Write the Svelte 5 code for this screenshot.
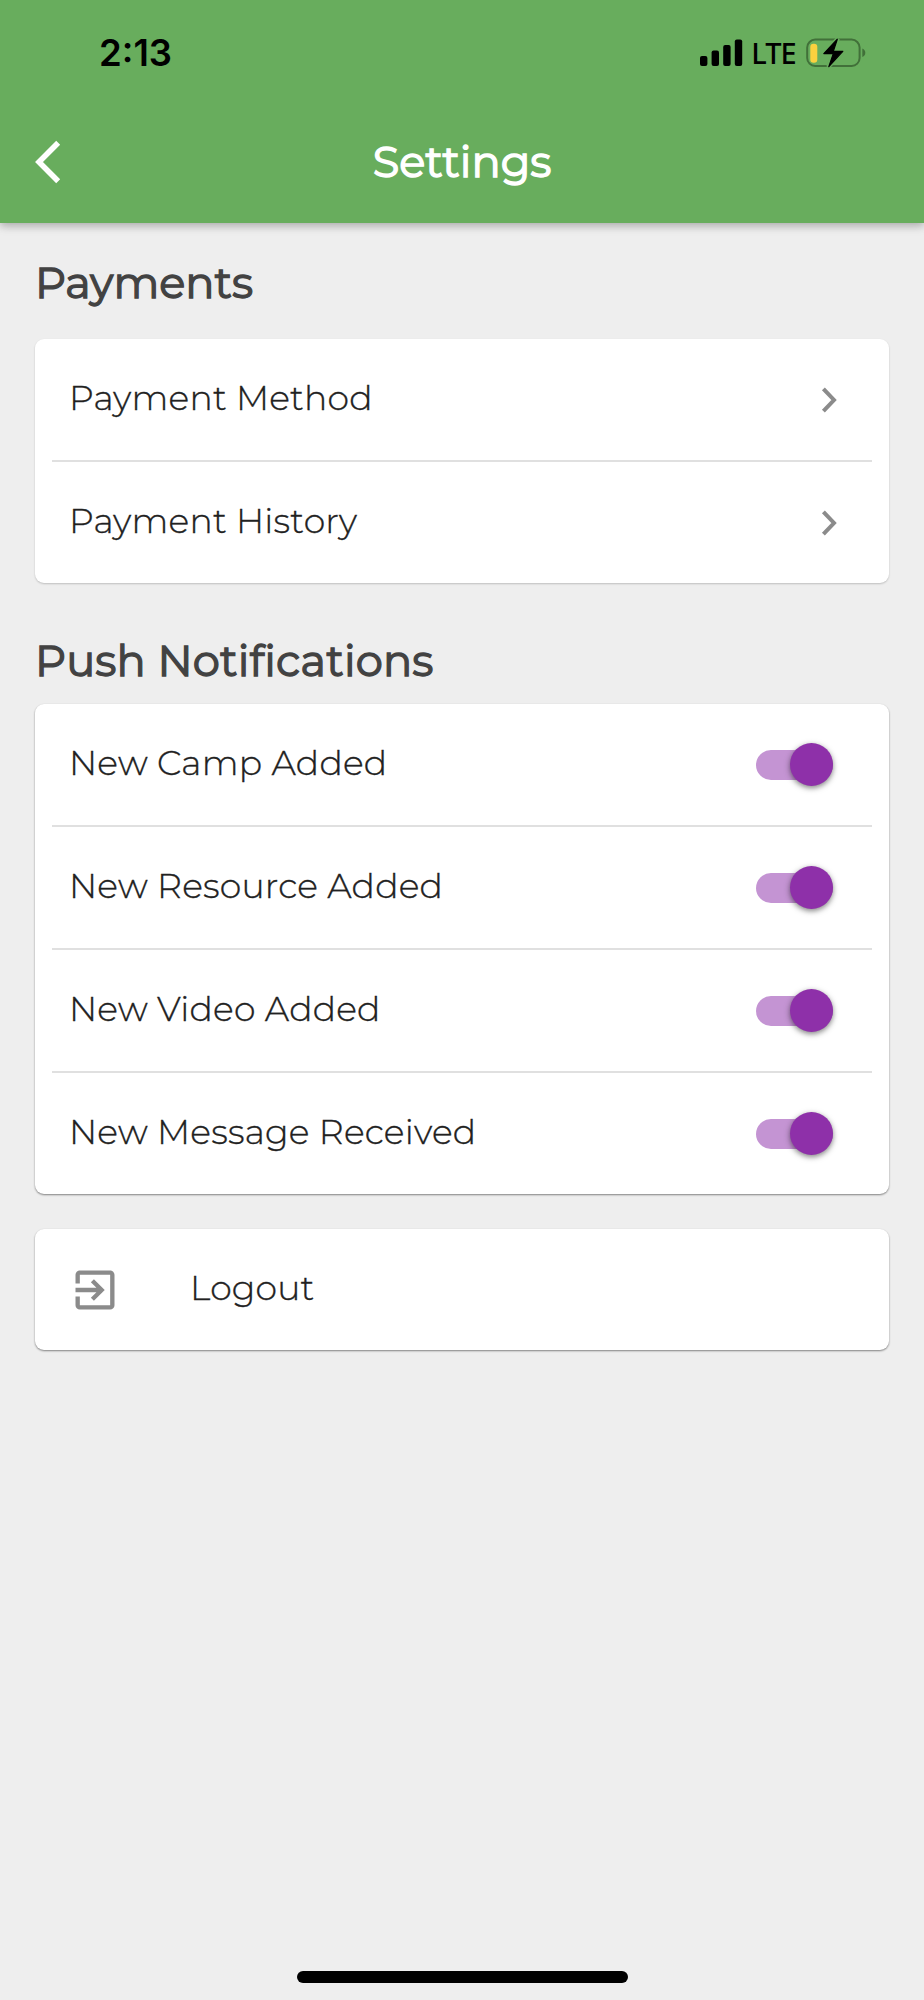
<script lang="ts">
  const payments = ["Payment Method", "Payment History"];

  let notifications = $state([
    { label: "New Camp Added", on: true },
    { label: "New Resource Added", on: true },
    { label: "New Video Added", on: true },
    { label: "New Message Received", on: true },
  ]);
</script>

<div class="screen">
  <header class="appbar">
    <div class="status">
      <span class="status__time">2:13</span>
      <div class="status__right">
        <svg width="43" height="28" viewBox="0 0 43 28">
          <rect x="0" y="17" width="7.4" height="10" rx="2" />
          <rect x="11.6" y="11.5" width="7.4" height="15.5" rx="2" />
          <rect x="23.2" y="6" width="7.4" height="21" rx="2" />
          <rect x="34.8" y="0.4" width="7.4" height="26.6" rx="2" />
        </svg>
        <span class="status__net">LTE</span>
        <svg width="60" height="30" viewBox="0 0 60 30">
          <rect x="1.2" y="1.6" width="52.4" height="26.4" rx="8" fill="none" stroke="#417039" stroke-width="2" />
          <path d="M56.3 10.5c2 .8 3 2.3 3 4.3s-1 3.5-3 4.3z" fill="#417039" />
          <rect x="4.3" y="5.7" width="7" height="19" rx="3.2" fill="#fbd13f" />
          <path d="M31.8 .6 17.3 15.8h9.6L22.3 29 37.3 13.2h-9.6z" stroke="#68ad5d" stroke-width="4" />
          <path d="M31.3 1.2 17.8 15.6h9.5L22.8 28.6 36.8 13.3h-9.5z" stroke="#000" stroke-width="1.2" stroke-linejoin="round" />
        </svg>
      </div>
    </div>
    <div class="toolbar">
      <button class="back" aria-label="Back">
        <svg width="28" height="46" viewBox="0 0 28 46">
          <path d="M23.2 3.8 4 23l19.2 19.2" fill="none" stroke="#fff" stroke-width="5.6" />
        </svg>
      </button>
      <h1 class="title">Settings</h1>
    </div>
  </header>

  <main>
    <h2 class="heading heading--payments">Payments</h2>
    <section class="card card--flat">
      {#each payments as label}
        <div class="row">
          <span class="label">{label}</span>
          <svg class="chevron" width="20" height="30" viewBox="0 0 20 30">
            <path d="M3.4 3.8 14 15 3.4 26.2" fill="none" stroke="#8b8b8b" stroke-width="4" />
          </svg>
        </div>
      {/each}
    </section>

    <h2 class="heading heading--push">Push Notifications</h2>
    <section class="card">
      {#each notifications as item}
        <div class="row">
          <span class="label">{item.label}</span>
          <button
            class="switch"
            class:switch--on={item.on}
            role="switch"
            aria-checked={item.on}
            aria-label={item.label}
            onclick={() => (item.on = !item.on)}
          >
            <span class="switch__thumb"></span>
          </button>
        </div>
      {/each}
    </section>

    <section class="card card--logout">
      <div class="row row--logout">
        <svg width="52" height="52" viewBox="0 0 24 24" fill="#8b8b8b">
          <path d="M10.09 15.59L11.5 17l5-5-5-5-1.41 1.41L12.67 11H3v2h9.67l-2.58 2.59zM19 3H5c-1.11 0-2 .9-2 2v4h2V5h14v14H5v-4H3v4c0 1.1.89 2 2 2h14c1.1 0 2-.9 2-2V5c0-1.1-.9-2-2-2z" />
        </svg>
        <span class="label">Logout</span>
      </div>
    </section>
  </main>

  <footer><div class="home-indicator"></div></footer>
</div>

<style>
  :global(body) { background: #eee; }
  .screen { display: flex; flex-direction: column; width: 924px; height: 2000px; background: #eee; font-family: Montserrat, Inter, "Open Sans", sans-serif; color: #212121; overflow: hidden; }
  h1, h2 { margin: 0; }
  svg { display: block; flex: none; }
  button { padding: 0; border: 0; background: none; cursor: pointer; }

  .appbar { flex: none; height: 222.5px; background: #68ad5d; box-shadow: 0 2px 8px rgba(0, 0, 0, 0.22), 0 4px 10px rgba(0, 0, 0, 0.1); }
  .status { display: flex; align-items: center; justify-content: space-between; height: 104px; padding: 0 58px 0 99px; color: #000; font-family: Inter, sans-serif; }
  .status__time { margin-top: 2px; font-size: 36.5px; font-weight: 600; }
  .status__right { display: flex; align-items: center; padding-top: 1px; }
  .status__net { width: 61px; margin-right: 2px; font-family: "Noto Sans", sans-serif; font-size: 29px; font-weight: 500; letter-spacing: -1px; line-height: 32px; text-align: center; }
  .toolbar { display: grid; grid-template-columns: 100px 1fr 100px; align-items: center; height: 116px; }
  .back { justify-self: start; margin-left: 35px; }
  .title { color: #fff; font-size: 43.2px; font-weight: 400; line-height: 56px; text-align: center; -webkit-text-stroke: 1.4px currentColor; }

  main { flex: 1; padding: 0 35px; }
  .heading { color: #424242; font-size: 43.2px; font-weight: 400; font-variant-ligatures: none; line-height: 56px; -webkit-text-stroke: 1.3px currentColor; }
  .heading--payments { margin: 32.5px 0 28px; }
  .heading--push { margin: 50px 0 15px; letter-spacing: 0.17px; }

  .card { border-radius: 9px; background: #fff; box-shadow: 0 1px 2px rgba(0, 0, 0, 0.38), 0 1px 2px rgba(0, 0, 0, 0.1); }
  .card--flat { box-shadow: 0 1px 2px rgba(0, 0, 0, 0.2); }
  .card--logout { margin-top: 35px; }
  .row { display: flex; align-items: center; justify-content: space-between; height: 121px; margin: 0 17px; padding: 0 35px 0 17px; }
  .row + .row { border-top: 2px solid #e0e0e0; }
  .label { padding-bottom: 3px; font-size: 34.6px; font-weight: 300; letter-spacing: 0.22px; line-height: 44px; white-space: nowrap; -webkit-text-stroke: 0.35px currentColor; }
  .row--logout { justify-content: flex-start; gap: 69px; }
  .chevron { margin-right: -3px; }

  .switch { display: flex; align-items: center; width: 77.5px; height: 30px; margin-right: 4px; border-radius: 15px; background: #bdbdbd; }
  .switch--on { justify-content: flex-end; background: #c494d3; }
  .switch__thumb { width: 43px; height: 43px; flex: none; border-radius: 50%; background: #fafafa; box-shadow: 0 2px 5px rgba(0, 0, 0, 0.4), 0 2px 8px rgba(0, 0, 0, 0.12); }
  .switch--on .switch__thumb { background: #8e30a9; }

  footer { display: flex; justify-content: center; height: 29px; }
  .home-indicator { width: 331px; height: 11.5px; border-radius: 6px; background: #000; }
</style>
